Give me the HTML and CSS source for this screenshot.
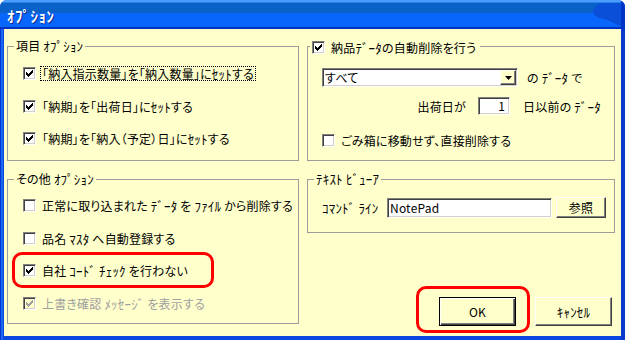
FILE: index.html
```html
<!DOCTYPE html>
<html lang="ja">
<head>
<meta charset="utf-8">
<title>ｵﾌﾟｼｮﾝ</title>
<link rel="stylesheet" href="styles.css">
</head>
<body>
<div class="window">
  <div class="titlebar">
    <span class="title">ｵﾌﾟｼｮﾝ</span>
    <svg class="title-deco" width="32" height="29" viewBox="0 0 32 29">
      <path d="M8 3 C3 5 0 8 0 12 C0 16 6 18 14 20 C20 22 24 25 28 27 L28 3 Z" fill="#0a4fd8"/>
      <path d="M28 0 L32 4 L32 29 L28 29 Z" fill="#0033c8"/>
    </svg>
  </div>
  <div class="client">
    <div class="col col-left">
      <div class="group g-top">
        <span class="legend">項目 <span class="hk">ｵﾌﾟｼｮﾝ</span></span>
        <div class="rows rows-1">
          <div class="check"><span class="cb"><svg width="9" height="9" viewBox="0 0 9 9"><path d="M1 3v3h1v1h1v1h1v-1h1v-1h1v-1h1v-1h1V1h-1v1h-1v1h-1v1h-1v1h-1v-1h-1v-1z"/></svg></span><span class="lbl focus">「納入指示数量」を「納入数量」に<span class="hk">ｾｯﾄ</span>する</span></div>
          <div class="check"><span class="cb"><svg width="9" height="9" viewBox="0 0 9 9"><path d="M1 3v3h1v1h1v1h1v-1h1v-1h1v-1h1v-1h1V1h-1v1h-1v1h-1v1h-1v1h-1v-1h-1v-1z"/></svg></span><span class="lbl">「納期」を「出荷日」に<span class="hk">ｾｯﾄ</span>する</span></div>
          <div class="check"><span class="cb"><svg width="9" height="9" viewBox="0 0 9 9"><path d="M1 3v3h1v1h1v1h1v-1h1v-1h1v-1h1v-1h1V1h-1v1h-1v1h-1v1h-1v1h-1v-1h-1v-1z"/></svg></span><span class="lbl">「納期」を「納入（予定）日」に<span class="hk">ｾｯﾄ</span>する</span></div>
        </div>
      </div>
      <div class="group g-other">
        <span class="legend">その他 <span class="hk">ｵﾌﾟｼｮﾝ</span></span>
        <div class="rows rows-2">
          <div class="check"><span class="cb"></span><span class="lbl">正常に取り込まれた <span class="hk">ﾃﾞｰﾀ</span> を <span class="hk">ﾌｧｲﾙ</span> から削除する</span></div>
          <div class="check"><span class="cb"></span><span class="lbl">品名 <span class="hk">ﾏｽﾀ</span> へ自動登録する</span></div>
          <div class="check"><span class="cb"><svg width="9" height="9" viewBox="0 0 9 9"><path d="M1 3v3h1v1h1v1h1v-1h1v-1h1v-1h1v-1h1V1h-1v1h-1v1h-1v1h-1v1h-1v-1h-1v-1z"/></svg></span><span class="lbl">自社 <span class="hk">ｺｰﾄﾞ ﾁｪｯｸ</span> を行わない</span></div>
          <div class="check disabled"><span class="cb"><svg width="9" height="9" viewBox="0 0 9 9"><path d="M1 3v3h1v1h1v1h1v-1h1v-1h1v-1h1v-1h1V1h-1v1h-1v1h-1v1h-1v1h-1v-1h-1v-1z"/></svg></span><span class="lbl">上書き確認 <span class="hk">ﾒｯｾｰｼﾞ</span> を表示する</span></div>
        </div>
      </div>
    </div>
    <div class="col col-right">
      <div class="group g-top">
        <span class="legend legend-check"><span class="cb"><svg width="9" height="9" viewBox="0 0 9 9"><path d="M1 3v3h1v1h1v1h1v-1h1v-1h1v-1h1v-1h1V1h-1v1h-1v1h-1v1h-1v1h-1v-1h-1v-1z"/></svg></span><span class="lbl">納品<span class="hk">ﾃﾞｰﾀ</span>の自動削除を行う</span></span>
        <div class="del-body">
          <div class="del-row1">
            <div class="combo"><span class="combo-text">すべて</span><span class="combo-btn"><svg width="7" height="4" viewBox="0 0 7 4"><path d="M0 0h7L3.5 4z"/></svg></span></div>
            <span class="after-combo">の <span class="hk">ﾃﾞｰﾀ</span> で</span>
          </div>
          <div class="del-row2">
            <span class="days-label">出荷日が</span>
            <span class="field days">1</span>
            <span class="days-after">日以前の <span class="hk">ﾃﾞｰﾀ</span></span>
          </div>
          <div class="check"><span class="cb"></span><span class="lbl">ごみ箱に移動せず、直接削除する</span></div>
        </div>
      </div>
      <div class="group g-viewer">
        <span class="legend"><span class="hk">ﾃｷｽﾄ ﾋﾞｭｰｱ</span></span>
        <div class="viewer-row">
          <span class="cmd-label"><span class="hk">ｺﾏﾝﾄﾞ ﾗｲﾝ</span></span>
          <span class="field cmd">NotePad</span>
          <span class="btn btn-browse">参照</span>
        </div>
      </div>
      <div class="buttons">
        <span class="btn btn-main default">OK</span>
        <span class="btn btn-main"><span class="hk">ｷｬﾝｾﾙ</span></span>
      </div>
    </div>
  </div>
  <div class="mark mark-check"></div>
  <div class="mark mark-ok"></div>
</div>
</body>
</html>
```

FILE: styles.css
```css
* { box-sizing: border-box; }
html, body { margin: 0; padding: 0; }
body {
  width: 625px;
  height: 340px;
  overflow: hidden;
  background: #ffffff;
  font-family: "Noto Sans CJK JP", "Noto Sans", sans-serif;
  font-size: 12px;
  color: #000;
  font-feature-settings: "palt";
  letter-spacing: 0.2px;
}
.hk {
  font-size: 13px;
  line-height: 1;
  font-feature-settings: normal;
  letter-spacing: 0.2px;
}
.window {
  position: relative;
  width: 625px;
  height: 340px;
  display: flex;
  flex-direction: column;
  background: linear-gradient(to right, #0831d9 0, #0831d9 1px, #166aee 1px, #166aee 3px, #0a46e0 3px, #0a46e0 621px, #0838cc 621px);
  border-radius: 7px 7px 0 0;
  overflow: hidden;
}
.titlebar {
  position: relative;
  flex: none;
  height: 29px;
  display: flex;
  align-items: center;
  padding: 2px 0 0 7px;
  background: linear-gradient(to bottom,
    #4a9cff 0, #4a9cff 2px,
    #2a7fe8 2px, #2a7fe8 3px,
    #0a62c8 3px, #0a62c8 13px,
    #0866fc 13px, #0866fc 27px,
    #0033c0 27px, #0033c0 29px);
}
.title {
  color: #fff;
  font-weight: bold;
  font-size: 15px;
  line-height: 15px;
  font-feature-settings: normal;
  letter-spacing: 0.5px;
  text-shadow: 1px 1px 0 #0a2a8c;
}
.title-deco {
  position: absolute;
  right: 0;
  top: 0;
}
.client {
  flex: 1;
  margin: 0 4px 4px 4px;
  background: #ffffcc;
  display: flex;
  gap: 8px;
  padding: 17px 0 0 3px;
}
.col {
  display: flex;
  flex-direction: column;
  gap: 18px;
}
.col-left { width: 292px; }
.col-right { width: 308px; }
.group {
  position: relative;
  border: 1px solid #9c9c9c;
}
.g-top { height: 115px; }
.g-other { height: 145px; }
.g-viewer { height: 54px; }
.legend {
  position: absolute;
  top: -8px;
  left: 6px;
  padding: 0 2px;
  background: #ffffcc;
  line-height: 14px;
  white-space: nowrap;
}
.legend-check {
  left: 2px;
  top: -7px;
  display: flex;
  align-items: center;
}
.rows {
  display: flex;
  flex-direction: column;
  gap: 19.5px;
  padding-left: 15px;
}
.rows-1 { padding-top: 20px; }
.rows-2 { padding-top: 19px; }
.check {
  display: flex;
  align-items: center;
  height: 13px;
  white-space: nowrap;
}
.cb {
  flex: none;
  display: inline-flex;
  width: 13px;
  height: 13px;
  padding: 1px;
  margin-right: 4px;
  background: #fff;
  border: 1px solid;
  border-color: #808080 #ffffff #ffffff #808080;
  box-shadow: inset 1px 1px 0 #404040, inset -1px -1px 0 #d4d0c8;
}
.cb svg { display: block; shape-rendering: crispEdges; fill: #000; }
.lbl {
  padding: 0 1px;
  line-height: 13px;
  border: 1px solid transparent;
}
.lbl.focus { border: 1px dotted #000; }
.disabled .cb { background: #ffffcc; }
.disabled .cb svg { fill: #a0a0a0; }
.disabled .lbl { color: #a0a0a0; }

.del-body {
  padding: 21px 0 0 14px;
  display: flex;
  flex-direction: column;
}
.del-row1 {
  display: flex;
  align-items: center;
  height: 19px;
}
.combo {
  width: 196px;
  height: 19px;
  display: flex;
  align-items: stretch;
  padding: 1px;
  background: #fff;
  border: 1px solid;
  border-color: #808080 #ffffff #ffffff #808080;
  box-shadow: inset 1px 1px 0 #404040, inset -1px -1px 0 #d4d0c8;
}
.combo-text {
  flex: 1;
  line-height: 15px;
  padding-left: 1px;
}
.combo-btn {
  width: 16px;
  display: flex;
  align-items: center;
  justify-content: center;
  background: #ffffcc;
  border: 1px solid;
  border-color: #ffffff #404040 #404040 #ffffff;
  box-shadow: inset -1px -1px 0 #808080;
}
.combo-btn svg { display: block; fill: #000; }
.after-combo { margin-left: 9px; }
.del-row2 {
  display: flex;
  align-items: center;
  height: 18px;
  margin-top: 10px;
  margin-bottom: 19px;
}
.days-label {
  width: 144px;
  text-align: right;
}
.field {
  display: block;
  background: #fff;
  border: 1px solid;
  border-color: #808080 #ffffff #ffffff #808080;
  box-shadow: inset 1px 1px 0 #404040, inset -1px -1px 0 #d4d0c8;
  white-space: nowrap;
}
.days {
  width: 32px;
  height: 18px;
  margin-left: 12px;
  text-align: right;
  padding-right: 4px;
  line-height: 16px;
}
.days-after { margin-left: 13px; }

.viewer-row {
  display: flex;
  align-items: center;
  padding: 17px 0 0 14px;
}
.cmd-label { width: 65px; }
.cmd {
  width: 165px;
  height: 20px;
  line-height: 17px;
  padding-left: 2px;
}
.btn {
  display: flex;
  align-items: center;
  justify-content: center;
  background: #ffffcc;
  border: 1px solid;
  border-color: #ffffff #404040 #404040 #ffffff;
  box-shadow: inset -1px -1px 0 #808080;
  white-space: nowrap;
}
.btn-browse {
  width: 50px;
  height: 21px;
  margin-left: 4px;
}
.buttons {
  display: flex;
  justify-content: flex-end;
  gap: 19px;
  padding-right: 3px;
  margin-top: 46px;
}
.btn-main {
  width: 77px;
  height: 29px;
}
.btn.default {
  border: 1px solid #000;
  box-shadow: inset 1px 1px 0 #ffffff, inset -1px -1px 0 #404040, inset -2px -2px 0 #808080;
}
.mark {
  position: absolute;
  border: 3px solid #ff0000;
  border-radius: 10px;
}
.mark-check { left: 12px; top: 252px; width: 202px; height: 36px; }
.mark-ok { left: 416px; top: 286px; width: 114px; height: 47px; }
```
